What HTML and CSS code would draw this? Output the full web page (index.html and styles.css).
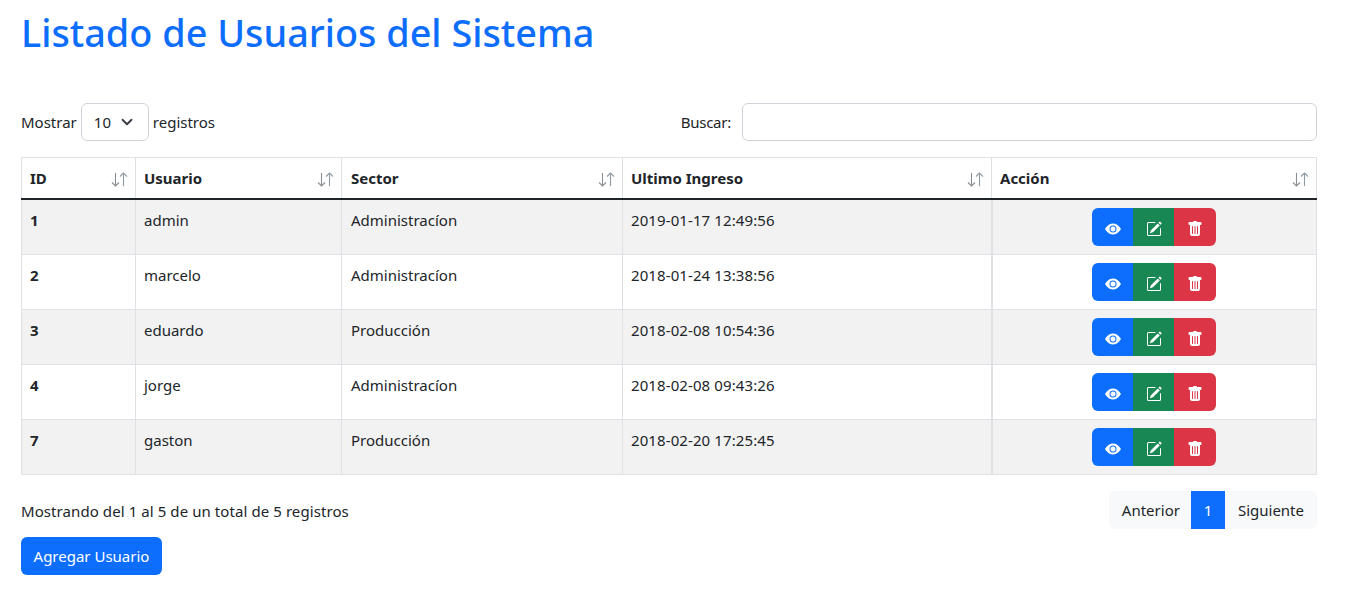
FILE: index.html
```html
<!DOCTYPE html>
<html lang="es">
<head>
<meta charset="utf-8">
<title>Listado de Usuarios</title>
<link rel="stylesheet" href="styles.css">
</head>
<body>
<svg class="defs" width="0" height="0">
  <symbol id="eye" viewBox="0 0 16 16"><path d="M10.5 8a2.5 2.5 0 1 1-5 0 2.5 2.5 0 0 1 5 0z"/><path d="M0 8s3-5.5 8-5.5S16 8 16 8s-3 5.5-8 5.5S0 8 0 8zm8 3.5a3.5 3.5 0 1 0 0-7 3.5 3.5 0 0 0 0 7z"/></symbol>
  <symbol id="edit" viewBox="0 0 16 16"><path d="M15.502 1.94a.5.5 0 0 1 0 .706L14.459 3.69l-2-2L13.502.646a.5.5 0 0 1 .707 0l1.293 1.293zm-1.75 2.456-2-2L4.939 9.21a.5.5 0 0 0-.121.196l-.805 2.414a.25.25 0 0 0 .316.316l2.414-.805a.5.5 0 0 0 .196-.12l6.813-6.814z"/><path fill-rule="evenodd" d="M1 13.5A1.5 1.5 0 0 0 2.5 15h11a1.5 1.5 0 0 0 1.5-1.5v-6a.5.5 0 0 0-1 0v6a.5.5 0 0 1-.5.5h-11a.5.5 0 0 1-.5-.5v-11a.5.5 0 0 1 .5-.5H9a.5.5 0 0 0 0-1H2.5A1.5 1.5 0 0 0 1 2.5v11z"/></symbol>
  <symbol id="trash" viewBox="0 0 16 16"><path d="M2.5 1a1 1 0 0 0-1 1v1a1 1 0 0 0 1 1H3v9a2 2 0 0 0 2 2h6a2 2 0 0 0 2-2V4h.5a1 1 0 0 0 1-1V2a1 1 0 0 0-1-1H10a1 1 0 0 0-1-1H7a1 1 0 0 0-1 1H2.5zm3 4a.5.5 0 0 1 .5.5v7a.5.5 0 0 1-1 0v-7a.5.5 0 0 1 .5-.5zM8 5a.5.5 0 0 1 .5.5v7a.5.5 0 0 1-1 0v-7A.5.5 0 0 1 8 5zm3 .5v7a.5.5 0 0 1-1 0v-7a.5.5 0 0 1 1 0z"/></symbol>
  <symbol id="sort" viewBox="0 0 17 15"><path d="M4.5 1v13M1 10.5 4.5 14 8 10.5" class="sort-down"/><path d="M12.5 14V1M9 4.5 12.5 1 16 4.5" class="sort-up"/></symbol>
</svg>
<main class="page">
  <h1 class="title">Listado de Usuarios del Sistema</h1>
  <div class="controls">
    <label class="length">Mostrar
      <span class="select">10
        <svg class="chevron" viewBox="0 0 16 16"><path d="m2 5 6 6 6-6"/></svg>
      </span>
      registros</label>
    <label class="search"><span class="search-label">Buscar:</span><span class="search-input"></span></label>
  </div>
  <table class="users">
    <colgroup>
      <col class="c1"><col class="c2"><col class="c3"><col class="c4"><col class="c5">
    </colgroup>
    <thead>
      <tr>
        <th>ID<svg class="sort"><use href="#sort"/></svg></th>
        <th>Usuario<svg class="sort"><use href="#sort"/></svg></th>
        <th class="sector">Sector<svg class="sort"><use href="#sort"/></svg></th>
        <th>Ultimo Ingreso<svg class="sort"><use href="#sort"/></svg></th>
        <th>Acción<svg class="sort"><use href="#sort"/></svg></th>
      </tr>
    </thead>
    <tbody>
      <tr class="odd"><td class="id">1</td><td>admin</td><td class="sector">Administracíon</td><td class="date">2019-01-17 12:49:56</td><td class="act"><div class="group"><a class="b blue"><svg><use href="#eye"/></svg></a><a class="b green"><svg><use href="#edit"/></svg></a><a class="b red"><svg><use href="#trash"/></svg></a></div></td></tr>
      <tr><td class="id">2</td><td>marcelo</td><td class="sector">Administracíon</td><td class="date">2018-01-24 13:38:56</td><td class="act"><div class="group"><a class="b blue"><svg><use href="#eye"/></svg></a><a class="b green"><svg><use href="#edit"/></svg></a><a class="b red"><svg><use href="#trash"/></svg></a></div></td></tr>
      <tr class="odd"><td class="id">3</td><td>eduardo</td><td class="sector">Producción</td><td class="date">2018-02-08 10:54:36</td><td class="act"><div class="group"><a class="b blue"><svg><use href="#eye"/></svg></a><a class="b green"><svg><use href="#edit"/></svg></a><a class="b red"><svg><use href="#trash"/></svg></a></div></td></tr>
      <tr><td class="id">4</td><td>jorge</td><td class="sector">Administracíon</td><td class="date">2018-02-08 09:43:26</td><td class="act"><div class="group"><a class="b blue"><svg><use href="#eye"/></svg></a><a class="b green"><svg><use href="#edit"/></svg></a><a class="b red"><svg><use href="#trash"/></svg></a></div></td></tr>
      <tr class="odd"><td class="id">7</td><td>gaston</td><td class="sector">Producción</td><td class="date">2018-02-20 17:25:45</td><td class="act"><div class="group"><a class="b blue"><svg><use href="#eye"/></svg></a><a class="b green"><svg><use href="#edit"/></svg></a><a class="b red"><svg><use href="#trash"/></svg></a></div></td></tr>
    </tbody>
  </table>
  <div class="foot">
    <div class="info">Mostrando del 1 al 5 de un total de 5 registros</div>
    <div class="pager"><a class="p first">Anterior</a><a class="p on">1</a><a class="p last">Siguiente</a></div>
  </div>
  <a class="add">Agregar Usuario</a>
</main>
</body>
</html>
```
FILE: styles.css
```css
* { box-sizing: border-box; }
html, body { margin: 0; background: #fff; }
body {
  font-family: "Noto Sans", "Open Sans", "Liberation Sans", sans-serif;
  font-size: 15px;
  line-height: 24px;
  color: #212529;
  overflow: hidden;
  height: 601px;
}
.defs { position: absolute; }
.page { padding: 9px 51px 0 21px; }
.title {
  margin: 0;
  height: 48px;
  font-size: 37.8px;
  line-height: 48px;
  font-weight: 500;
  color: #0d6efd;
}
.controls {
  margin-top: 46px;
  display: flex;
  justify-content: space-between;
  align-items: center;
  height: 38px;
}
.length, .search { display: flex; align-items: center; }
.search-label { letter-spacing: -.25px; }
.select {
  margin: 0 4px;
  width: 68px;
  height: 38px;
  padding: 0 12px;
  display: flex;
  align-items: center;
  justify-content: space-between;
  border: 1px solid #ced4da;
  border-radius: 6px;
}
.chevron { width: 12px; height: 12px; margin-right: 3px; }
.chevron path { fill: none; stroke: #343a40; stroke-width: 2.4; stroke-linecap: round; stroke-linejoin: round; }
.search-input {
  margin-left: 11px;
  width: 575px;
  height: 38px;
  border: 1px solid #ced4da;
  border-radius: 6px;
}
.users {
  margin-top: 16px;
  width: 1295px;
  table-layout: fixed;
  border-collapse: collapse;
}
.c1 { width: 114px; }
.c2 { width: 206px; }
.c3 { width: 281px; }
.c4 { width: 369px; }
.c5 { width: 325px; }
.users th, .users td { border: 1px solid #dee2e6; padding: 8px; text-align: left; vertical-align: top; }
.users th { position: relative; height: 41px; font-weight: 700; border-bottom: 2px solid #212529; }
.users td { height: 55px; }
.users td.id { font-weight: 700; }
.users .sector { padding-left: 9px; }
.users td.date { letter-spacing: .1px; }
.users td.act { text-align: center; border-left-width: 2px; }
.odd td { background: #f2f2f2; }
.sort { position: absolute; right: 7px; top: 14px; width: 17px; height: 15px; }
.sort-down, .sort-up { fill: none; stroke-width: 1.1; }
.sort-down { stroke: #8a8f94; }
.sort-up { stroke: #8f9aa5; }
.group { display: inline-flex; vertical-align: top; }
.b { height: 38px; padding-top: 3px; display: flex; align-items: center; justify-content: center; }
.b svg { width: 16px; height: 16px; fill: #fff; display: block; }
.blue { width: 41px; background: #0d6efd; border-radius: 6px 0 0 6px; }
.green { width: 41px; background: #198754; }
.red { width: 42px; background: #dc3545; border-radius: 0 6px 6px 0; }
.foot {
  margin-top: 16px;
  display: flex;
  justify-content: space-between;
  align-items: center;
}
.info { padding-top: 2px; letter-spacing: .08px; }
.pager { display: flex; height: 38px; }
.p { display: flex; align-items: center; padding: 0 13px; background: #f8f9fa; color: #212529; }
.first { padding-right: 11px; border-radius: 6px 0 0 6px; }
.last { border-radius: 0 6px 6px 0; }
.on { width: 34px; justify-content: center; padding: 0; background: #0d6efd; color: #fff; }
.add {
  margin-top: 8px;
  display: inline-flex;
  align-items: center;
  height: 38px;
  width: 141px;
  justify-content: center;
  background: #0d6efd;
  color: #fff;
  border-radius: 6px;
}
```
